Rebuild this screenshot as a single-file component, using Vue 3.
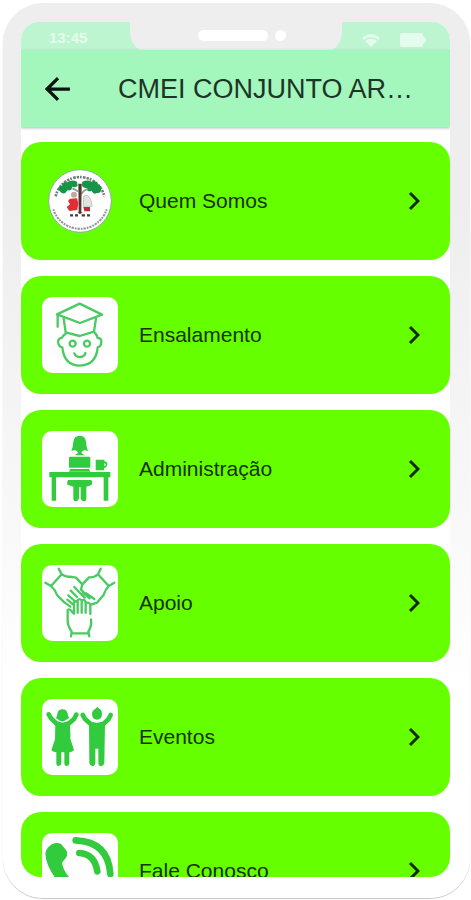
<script setup>
const title = 'CMEI CONJUNTO AR…'

const items = [
  { id: 'about', label: 'Quem Somos' },
  { id: 'rooms', label: 'Ensalamento' },
  { id: 'admin', label: 'Administração' },
  { id: 'support', label: 'Apoio' },
  { id: 'events', label: 'Eventos' },
  { id: 'contact', label: 'Fale Conosco' },
]
</script>

<template>
  <div class="phone">
    <div class="screen">
      <div class="status">
        <span class="time">13:45</span>
        <div class="notch">
          <span class="speaker"></span>
          <span class="camera"></span>
        </div>
        <div class="signals">
          <svg class="wifi" viewBox="0 0 20 14">
            <path d="M1 5 Q10 -3 19 5 L17 7 Q10 1 3 7Z" />
            <path d="M4 8 Q10 3 16 8 L10 14Z" />
          </svg>
          <svg class="battery" viewBox="0 0 26 14">
            <rect width="23" height="14" rx="2" />
            <path d="M23 3 L26 6 V8 L23 11Z" />
          </svg>
        </div>
      </div>

      <header class="topbar">
        <button class="back" type="button" aria-label="Voltar">
          <svg viewBox="0 0 24 24">
            <path d="M23 12H2M12 2L2 12L12 22" />
          </svg>
        </button>
        <h1>{{ title }}</h1>
      </header>

      <main class="menu">
        <button v-for="item in items" :key="item.id" class="card" type="button">
          <!-- school crest -->
          <svg v-if="item.id === 'about'" class="icon crest" viewBox="36 42 228 228">
            <circle cx="150" cy="156" r="94" fill="#fff" stroke="#8fae96" stroke-width="3" />
            <path d="M77 142A75 75 0 0 1 223 142" fill="none" stroke="#6f8078" stroke-width="8" stroke-dasharray="7 3 5 4 8 3" />
            <path d="M70 181A84 84 0 0 0 230 181" fill="none" stroke="#8a9690" stroke-width="6" stroke-dasharray="5 3 7 3" />
            <path d="M86 122Q83 111 97 110Q96 98 112 100Q126 90 141 98L143 110Q137 117 126 113Q127 126 112 124Q105 138 94 131Z" fill="#169447" />
            <path d="M157 98Q173 91 185 98Q201 94 203 106Q217 110 213 121Q214 134 200 132Q191 138 185 126Q170 130 170 116Q159 119 155 108Z" fill="#169447" />
            <path d="M127 118Q137 121 144 128M174 121Q163 121 154 135" fill="none" stroke="#8b9b90" stroke-width="5" />
            <path d="M145 104L155 104L154 190H158L150 196L142 190H146Z" fill="#51372b" />
            <circle cx="132" cy="137" r="9" fill="#bdaaa0" />
            <path d="M120 149L141 148L145 163L142 183L118 186L110 174L120 166L114 156Z" fill="#e32d34" />
            <path d="M161 142Q174 133 182 151L187 172L160 172Z" fill="#e1e5e0" stroke="#a9b3ab" stroke-width="2" />
            <path d="M160 174H180V187H163Z" fill="#c72736" />
            <path d="M120 199H129M135 199H144M155 199H165M171 199H180" stroke="#38453c" stroke-width="7" />
          </svg>

          <!-- graduate -->
          <svg v-else-if="item.id === 'rooms'" class="icon line" viewBox="37 39 228 228">
            <path d="M82 91L150 59L217 92L151 117Z" />
            <path d="M84 91V128M102 104L108 145L150 156L193 143L199 103" />
            <path d="M108 149Q99 155 97 161Q82 165 86 178Q89 190 98 190Q103 244 151 245Q200 242 204 190Q215 187 215 174Q216 162 204 162Q201 150 193 144" />
            <circle cx="129" cy="179" r="9" />
            <circle cx="172" cy="179" r="9" />
            <path d="M134 208Q138 219 151 219Q165 218 167 207" />
          </svg>

          <!-- person at the desk -->
          <svg v-else-if="item.id === 'admin'" class="icon solid" viewBox="37 34 228 228">
            <path d="M125 94Q130 82 131 66Q133 48 150 48Q167 48 169 66Q170 82 175 94L164 91L156 96V101L166 107H135L144 101V96L136 91Z" />
            <rect x="118" y="111" width="64" height="33" rx="3" />
            <path d="M122 148H178L182 156H118Z" />
            <path fill-rule="evenodd" d="M198 120H224V125Q234 126 233 135Q231 144 223 146V152H198ZM224 131V140Q229 138 228 134Q227 131 224 131Z" />
            <path d="M59 157H242V173H236V243H222V173H79V243H66V173H59Z" />
            <path d="M115 181H185Q190 187 186 196L170 201V237Q169 246 160 245Q154 244 153 235V203H148V235Q147 244 140 245Q131 245 131 237V201L113 195Q111 187 115 181Z" />
          </svg>

          <!-- joined hands -->
          <svg v-else-if="item.id === 'support'" class="icon line" viewBox="37 39 228 228">
            <path d="M87 50L96 67L64 102L47 92M96 67Q109 76 121 74L139 77L158 97L154 113L164 123" />
            <path d="M64 102Q78 115 82 129L104 151L122 164" />
            <path d="M213 50L205 67L237 102L254 92M205 67Q193 77 178 76L158 97M237 102Q227 113 222 128L202 152L184 158" />
            <path d="M134 105L151 123L165 137M123 116L142 135M116 130L135 147M113 143L130 157M160 122L180 139M169 124L194 141" />
            <path d="M124 253L126 239Q112 219 114 198V174Q120 169 126 178L133 185V151Q139 144 144 152V182M144 151V145Q150 138 156 145V182M156 148Q163 139 168 149V182M168 155Q176 148 182 157V186M184 202Q187 221 176 239L179 253M126 244H177" />
          </svg>

          <!-- two children -->
          <svg v-else-if="item.id === 'events'" class="icon solid" viewBox="37 39 228 228">
            <path d="M79 96Q84 88 83 82Q86 70 98 70Q111 70 114 83Q114 89 119 96L113 99Q98 113 84 100Z" />
            <path d="M57 85L64 97L80 112L98 118L118 112L133 99L140 86" class="limb" />
            <path d="M77 112H120Q123 137 122 158L133 192Q127 199 119 199V233Q118 240 111 240Q104 240 104 232V199H95V232Q94 240 87 240Q80 240 80 232V199Q71 199 65 193L76 160Z" />
            <path d="M203 62L209 68Q217 72 217 85Q216 101 202 101Q188 101 187 85Q187 73 197 69Z" />
            <path d="M159 87L166 99L183 114L202 118L222 113L236 100L243 87" class="limb" />
            <path d="M178 110Q202 121 226 110L224 229Q223 240 214 240Q206 240 206 230V188H197V230Q196 240 188 240Q179 239 179 229Z" />
          </svg>

          <!-- ringing phone -->
          <svg v-else class="icon solid" viewBox="128 127 228 228">
            <path d="M165 158Q182 155 188 163L202 181Q206 191 200 201L188 216Q191 240 214 264Q237 291 261 296L278 285Q287 279 299 286L320 302Q328 313 319 326Q302 346 275 338Q215 320 173 269Q139 225 138 187Q143 166 165 158Z" />
            <path d="M229 149Q327 153 333 250" class="wave" />
            <path d="M240 187Q286 190 294 242" class="wave" />
          </svg>

          <span class="label">{{ item.label }}</span>
          <svg class="chevron" viewBox="0 0 12 20">
            <path d="M2 2L10 10L2 18" />
          </svg>
        </button>
      </main>
    </div>
  </div>
</template>

<style>
body {
  background: #fff;
}
</style>

<style scoped>
.phone {
  box-sizing: border-box;
  height: calc(100vh - 5px);
  margin: 3px 1px 2px 3px;
  padding: 19px 20px 21px 18px;
  border-radius: 40px;
  background: linear-gradient(#eee 0, #eee 200px, #f7f7f7 480px, #fff 680px);
  box-shadow: 0 1px 1px #c4c4c4;
  font-family: 'Liberation Sans', Arial, sans-serif;
}

.screen {
  display: flex;
  flex-direction: column;
  height: 100%;
  overflow: hidden;
  border-radius: 18px 18px 20px 20px;
  background: #fff;
}

.status {
  display: grid;
  grid-template-columns: 1fr 212px 1fr;
  flex: none;
  height: 28px;
  background: #bdf5d1;
}

.time {
  padding-left: 28px;
  color: #e4fced;
  font-size: 15px;
  font-weight: bold;
  line-height: 32px;
}

.notch {
  display: flex;
  align-items: center;
  justify-content: center;
  gap: 7px;
  padding-left: 12px;
  padding-bottom: 6px;
  border-radius: 0 0 22px 22px;
  background: #eee;
}

.speaker {
  width: 70px;
  height: 11px;
  border-radius: 6px;
  background: #fff;
}

.camera {
  width: 11px;
  height: 11px;
  border-radius: 50%;
  background: #fff;
}

.signals {
  display: flex;
  align-items: center;
  justify-content: flex-end;
  gap: 19px;
  padding: 4px 24px 0 0;
  fill: #e4fced;
}

.wifi {
  width: 20px;
  height: 14px;
}

.battery {
  width: 26px;
  height: 14px;
}

.topbar {
  display: flex;
  align-items: center;
  flex: none;
  gap: 47px;
  height: 77px;
  padding: 0 24px;
  background: #a3f7bd;
  box-shadow: 0 1px 3px #b5b5b5;
}

.back {
  display: flex;
  padding: 0;
  border: 0;
  background: none;
  cursor: pointer;
}

.back svg {
  width: 26px;
  height: 26px;
  fill: none;
  stroke: #0b140e;
  stroke-width: 3;
}

h1 {
  flex: 1;
  margin: 0;
  color: #1d3526;
  font-size: 27px;
  font-weight: normal;
  line-height: 32px;
  white-space: nowrap;
}

.menu {
  display: flex;
  flex-direction: column;
  gap: 16px;
  flex: 1;
  min-height: 0;
  padding-top: 15px;
  overflow: hidden;
}

.card {
  display: flex;
  align-items: center;
  flex: none;
  gap: 21px;
  height: 118px;
  padding: 0 30px 0 21px;
  border: 0;
  border-radius: 20px;
  background: #6f0;
  color: #143200;
  font-family: inherit;
  font-size: 21px;
  line-height: 28px;
  text-align: left;
  cursor: pointer;
}

.icon {
  flex: none;
  width: 76px;
  height: 76px;
  border-radius: 10px;
  background: #fff;
}

.crest {
  background: none;
}

.line {
  fill: none;
  stroke: #4aca64;
  stroke-width: 7;
  stroke-linejoin: round;
  stroke-linecap: round;
}

.solid {
  fill: #32cb3e;
}

.limb,
.wave {
  fill: none;
  stroke: #32cb3e;
  stroke-linecap: round;
}

.limb {
  stroke-width: 14;
}

.wave {
  stroke-width: 20;
}

.label {
  flex: 1;
}

.chevron {
  width: 12px;
  height: 20px;
  fill: none;
  stroke: #0f2a00;
  stroke-width: 3;
}
</style>
